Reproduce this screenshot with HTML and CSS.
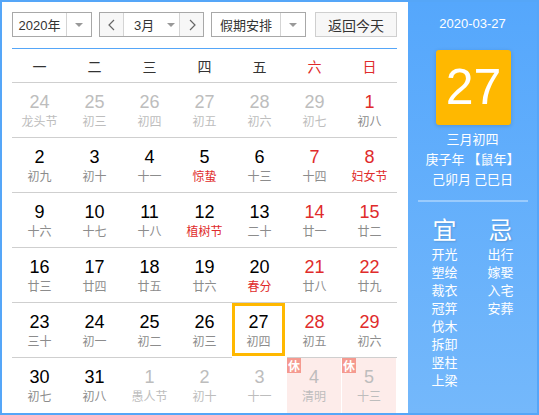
FILE: index.html
```html
<!DOCTYPE html>
<html lang="zh">
<head>
<meta charset="utf-8">
<link rel="stylesheet" href="styles.css">
</head>
<body>
<div class="cal">
  <div class="main">
    <div class="controls">
      <div class="sel year"><span class="sel-text">2020年</span><span class="sel-arrow"><i class="tri"></i></span></div>
      <div class="sel month">
        <span class="nav"><svg width="10" height="14" viewBox="0 0 10 14"><polyline points="7,2 2,7 7,12" fill="none" stroke="#666" stroke-width="1.2"/></svg></span>
        <span class="month-text">3月<i class="tri"></i></span>
        <span class="nav"><svg width="10" height="14" viewBox="0 0 10 14"><polyline points="3,2 8,7 3,12" fill="none" stroke="#666" stroke-width="1.2"/></svg></span>
      </div>
      <div class="sel holiday"><span class="sel-text">假期安排</span><span class="sel-arrow"><i class="tri"></i></span></div>
      <div class="btn">返回今天</div>
    </div>
    <div class="sep"></div>
    <div class="week">
      <span>一</span><span>二</span><span>三</span><span>四</span><span>五</span><span class="red">六</span><span class="red">日</span>
    </div>
    <div class="grid">
      <div class="cell other"><b>24</b><em>龙头节</em></div>
      <div class="cell other"><b>25</b><em>初三</em></div>
      <div class="cell other"><b>26</b><em>初四</em></div>
      <div class="cell other"><b>27</b><em>初五</em></div>
      <div class="cell other"><b>28</b><em>初六</em></div>
      <div class="cell other"><b>29</b><em>初七</em></div>
      <div class="cell wk"><b>1</b><em>初八</em></div>

      <div class="cell"><b>2</b><em>初九</em></div>
      <div class="cell"><b>3</b><em>初十</em></div>
      <div class="cell"><b>4</b><em>十一</em></div>
      <div class="cell fest"><b>5</b><em>惊蛰</em></div>
      <div class="cell"><b>6</b><em>十三</em></div>
      <div class="cell wk"><b>7</b><em>十四</em></div>
      <div class="cell wk fest"><b>8</b><em>妇女节</em></div>

      <div class="cell"><b>9</b><em>十六</em></div>
      <div class="cell"><b>10</b><em>十七</em></div>
      <div class="cell"><b>11</b><em>十八</em></div>
      <div class="cell fest"><b>12</b><em>植树节</em></div>
      <div class="cell"><b>13</b><em>二十</em></div>
      <div class="cell wk"><b>14</b><em>廿一</em></div>
      <div class="cell wk"><b>15</b><em>廿二</em></div>

      <div class="cell"><b>16</b><em>廿三</em></div>
      <div class="cell"><b>17</b><em>廿四</em></div>
      <div class="cell"><b>18</b><em>廿五</em></div>
      <div class="cell"><b>19</b><em>廿六</em></div>
      <div class="cell fest"><b>20</b><em>春分</em></div>
      <div class="cell wk"><b>21</b><em>廿八</em></div>
      <div class="cell wk"><b>22</b><em>廿九</em></div>

      <div class="cell"><b>23</b><em>三十</em></div>
      <div class="cell"><b>24</b><em>初一</em></div>
      <div class="cell"><b>25</b><em>初二</em></div>
      <div class="cell"><b>26</b><em>初三</em></div>
      <div class="cell today"><b>27</b><em>初四</em></div>
      <div class="cell wk"><b>28</b><em>初五</em></div>
      <div class="cell wk"><b>29</b><em>初六</em></div>

      <div class="cell last"><b>30</b><em>初七</em></div>
      <div class="cell last"><b>31</b><em>初八</em></div>
      <div class="cell last other"><b>1</b><em>愚人节</em></div>
      <div class="cell last other"><b>2</b><em>初十</em></div>
      <div class="cell last other"><b>3</b><em>十一</em></div>
      <div class="cell last other rest"><span class="badge">休</span><b>4</b><em>清明</em></div>
      <div class="cell last other rest"><span class="badge">休</span><b>5</b><em>十三</em></div>
    </div>
  </div>
  <div class="side">
    <div class="side-date">2020-03-27</div>
    <div class="big-day">27</div>
    <div class="lunar">
      <div>三月初四</div>
      <div>庚子年 【鼠年】</div>
      <div>己卯月 己巳日</div>
    </div>
    <div class="side-sep"></div>
    <div class="yiji">
      <div class="col">
        <div class="yj-title">宜</div>
        <div>开光</div><div>塑绘</div><div>裁衣</div><div>冠笄</div><div>伐木</div><div>拆卸</div><div>竖柱</div><div>上梁</div>
      </div>
      <div class="col">
        <div class="yj-title">忌</div>
        <div>出行</div><div>嫁娶</div><div>入宅</div><div>安葬</div>
      </div>
    </div>
  </div>
</div>
</body>
</html>
```
FILE: styles.css
```css
* { box-sizing: border-box; }
body {
  margin: 0;
  font-family: "Liberation Sans", "Noto Sans CJK SC", sans-serif;
}
.cal {
  width: 539px;
  height: 415px;
  border: 2px solid #55a6f8;
  display: flex;
  background: #fff;
}
.main {
  width: 406px;
  padding: 10px 11px 0 10px;
}
.controls {
  display: flex;
  height: 25px;
  font-size: 13px;
  color: #333;
  white-space: nowrap;
}
.sel {
  display: flex;
  border: 1px solid #a8a8a8;
  background: #fff;
  height: 25px;
}
.year { width: 80px; }
.month { width: 105px; margin-left: 7px; }
.holiday { width: 95px; margin-left: 7px; }
.sel-text {
  flex: 1;
  display: flex;
  align-items: center;
  justify-content: center;
  border-right: 1px solid #d4d4d4;
}
.sel-arrow {
  width: 24px;
  display: flex;
  align-items: center;
  justify-content: center;
}
.tri {
  display: inline-block;
  width: 0;
  height: 0;
  border-left: 4px solid transparent;
  border-right: 4px solid transparent;
  border-top: 4px solid #999;
}
.nav {
  width: 23px;
  flex: none;
  display: flex;
  align-items: center;
  justify-content: center;
  background: #f7f7f7;
}
.month-text {
  flex: 1;
  min-width: 0;
  display: flex;
  align-items: center;
  border-left: 1px solid #d4d4d4;
  border-right: 1px solid #d4d4d4;
  padding-left: 10px;
}
.month-text .tri { margin-left: 13px; }
.btn {
  margin-left: 9px;
  width: 82px;
  height: 25px;
  border: 1px solid #cfcfcf;
  background: #f7f7f7;
  display: flex;
  align-items: center;
  justify-content: center;
  font-size: 14px;
  color: #333;
}
.sep {
  margin-top: 11px;
  height: 1px;
  background: #55a6f8;
}
.week {
  display: grid;
  grid-template-columns: repeat(7, 55px);
  height: 34px;
  border-bottom: 1px solid #cfcfcf;
  font-family: "Noto Sans CJK SC", sans-serif;
  font-size: 14px;
  color: #333;
}
.week span {
  display: flex;
  align-items: center;
  justify-content: center;
  padding-top: 1px;
}
.week .red { color: #e02b2b; }
.grid {
  display: grid;
  grid-template-columns: repeat(7, 55px);
  grid-auto-rows: 55px;
}
.cell {
  position: relative;
  border-bottom: 1px solid #cfcfcf;
  display: flex;
  flex-direction: column;
  align-items: center;
  padding-top: 9px;
}
.cell.last { border-bottom: none; }
.cell b {
  font-weight: normal;
  font-size: 18px;
  line-height: 20px;
  color: #000;
}
.cell em {
  font-style: normal;
  font-family: "Noto Sans CJK SC", sans-serif;
  font-size: 12px;
  line-height: 16px;
  margin-top: 1px;
  color: #8c8c8c;
}
.cell.wk b { color: #e02b2b; }
.cell.fest em { color: #e02b2b; }
.cell.other b, .cell.other em { color: #bdbdbd; }
.cell.today {
  border: 3px solid #ffb800;
  margin: 0 2px 2px 0;
  padding-top: 6px;
}
.cell.rest {
  background: #fdecea;
  margin-right: 1px;
}
.badge {
  position: absolute;
  left: 0;
  top: 0;
  width: 14px;
  height: 15px;
  background: #f59a90;
  color: #fff;
  font-family: "Noto Sans CJK SC", sans-serif;
  font-size: 12px;
  font-weight: bold;
  line-height: 15px;
  text-align: center;
}
.side {
  flex: 1;
  background: linear-gradient(#55a7fc, #74b8fb);
  color: #fff;
  display: flex;
  flex-direction: column;
  align-items: center;
  padding-top: 12px;
}
.side-date {
  font-size: 13px;
  line-height: 20px;
}
.big-day {
  margin-top: 16px;
  width: 75px;
  height: 75px;
  background: #ffb800;
  border-radius: 3px;
  box-shadow: 0 1px 4px rgba(0,0,0,0.15);
  font-size: 50px;
  line-height: 75px;
  text-align: center;
  margin-left: 2px;
}
.lunar {
  margin-top: 4px;
  font-family: "Noto Sans CJK SC", sans-serif;
  font-size: 13px;
  line-height: 20px;
  text-align: center;
}
.side-sep {
  margin-top: 11px;
  width: 110px;
  height: 2px;
  background: rgba(255,255,255,0.35);
}
.yiji {
  margin-top: 12px;
  display: flex;
  font-family: "Noto Sans CJK SC", sans-serif;
  font-size: 13px;
  line-height: 18px;
}
.col {
  width: 56px;
  text-align: center;
}
.yj-title {
  font-size: 24px;
  line-height: 30px;
  margin-bottom: 1px;
  text-shadow: 1px 1px 2px rgba(0,0,0,0.15);
}
```
